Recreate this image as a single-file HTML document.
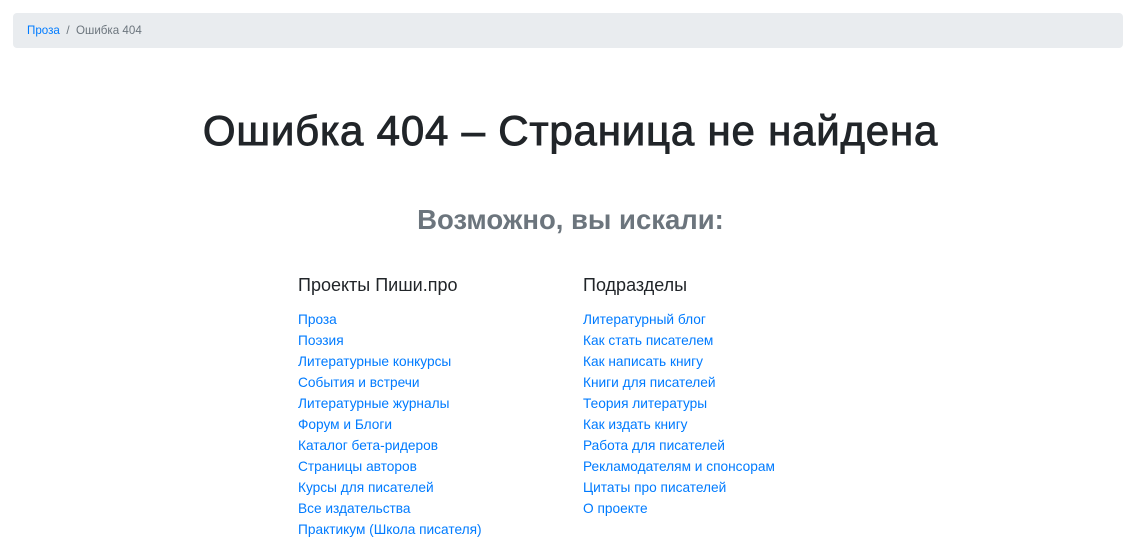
<!DOCTYPE html>
<html><head><meta charset="utf-8"><style>
body{margin:0;background:#fff;font-family:"Liberation Sans","DejaVu Sans",sans-serif;color:#212529;width:1141px;height:538px;overflow:hidden;position:relative}
.bc{position:absolute;left:13px;top:13px;width:1110px;height:35px;background:#e9ecef;border-radius:4px;font-size:11.6px;line-height:35px}
.bc span{position:absolute;left:14px}
a{color:#007bff;text-decoration:none}
h1{position:absolute;top:105px;left:0;width:1141px;text-align:center;margin:0;font-size:42px;font-weight:500;line-height:52px;letter-spacing:0.8px;-webkit-text-stroke:0.9px #212529}
h2{position:absolute;top:202px;left:0;width:1141px;text-align:center;margin:0;font-size:27.5px;font-weight:bold;color:#6c757d;line-height:36px}
.col{position:absolute;top:274px}
.col h3{margin:0 0 12px;font-size:18px;font-weight:normal;line-height:22px}
.col a{display:block;font-size:13.7px;line-height:21px;position:relative;top:1px}
</style></head><body>
<div class="bc"><span><a href="#">Проза</a> <span style="position:static;color:#6c757d">&nbsp;/&nbsp; Ошибка 404</span></span></div>
<h1>Ошибка 404 – Страница не найдена</h1>
<h2>Возможно, вы искали:</h2>
<div class="col" style="left:298px"><h3>Проекты Пиши.про</h3>
<a href="#">Проза</a><a href="#">Поэзия</a><a href="#">Литературные конкурсы</a><a href="#">События и встречи</a><a href="#">Литературные журналы</a><a href="#">Форум и Блоги</a><a href="#">Каталог бета-ридеров</a><a href="#">Страницы авторов</a><a href="#">Курсы для писателей</a><a href="#">Все издательства</a><a href="#">Практикум (Школа писателя)</a></div>
<div class="col" style="left:583px"><h3>Подразделы</h3>
<a href="#">Литературный блог</a><a href="#">Как стать писателем</a><a href="#">Как написать книгу</a><a href="#">Книги для писателей</a><a href="#">Теория литературы</a><a href="#">Как издать книгу</a><a href="#">Работа для писателей</a><a href="#">Рекламодателям и спонсорам</a><a href="#">Цитаты про писателей</a><a href="#">О проекте</a></div>
</body></html>
